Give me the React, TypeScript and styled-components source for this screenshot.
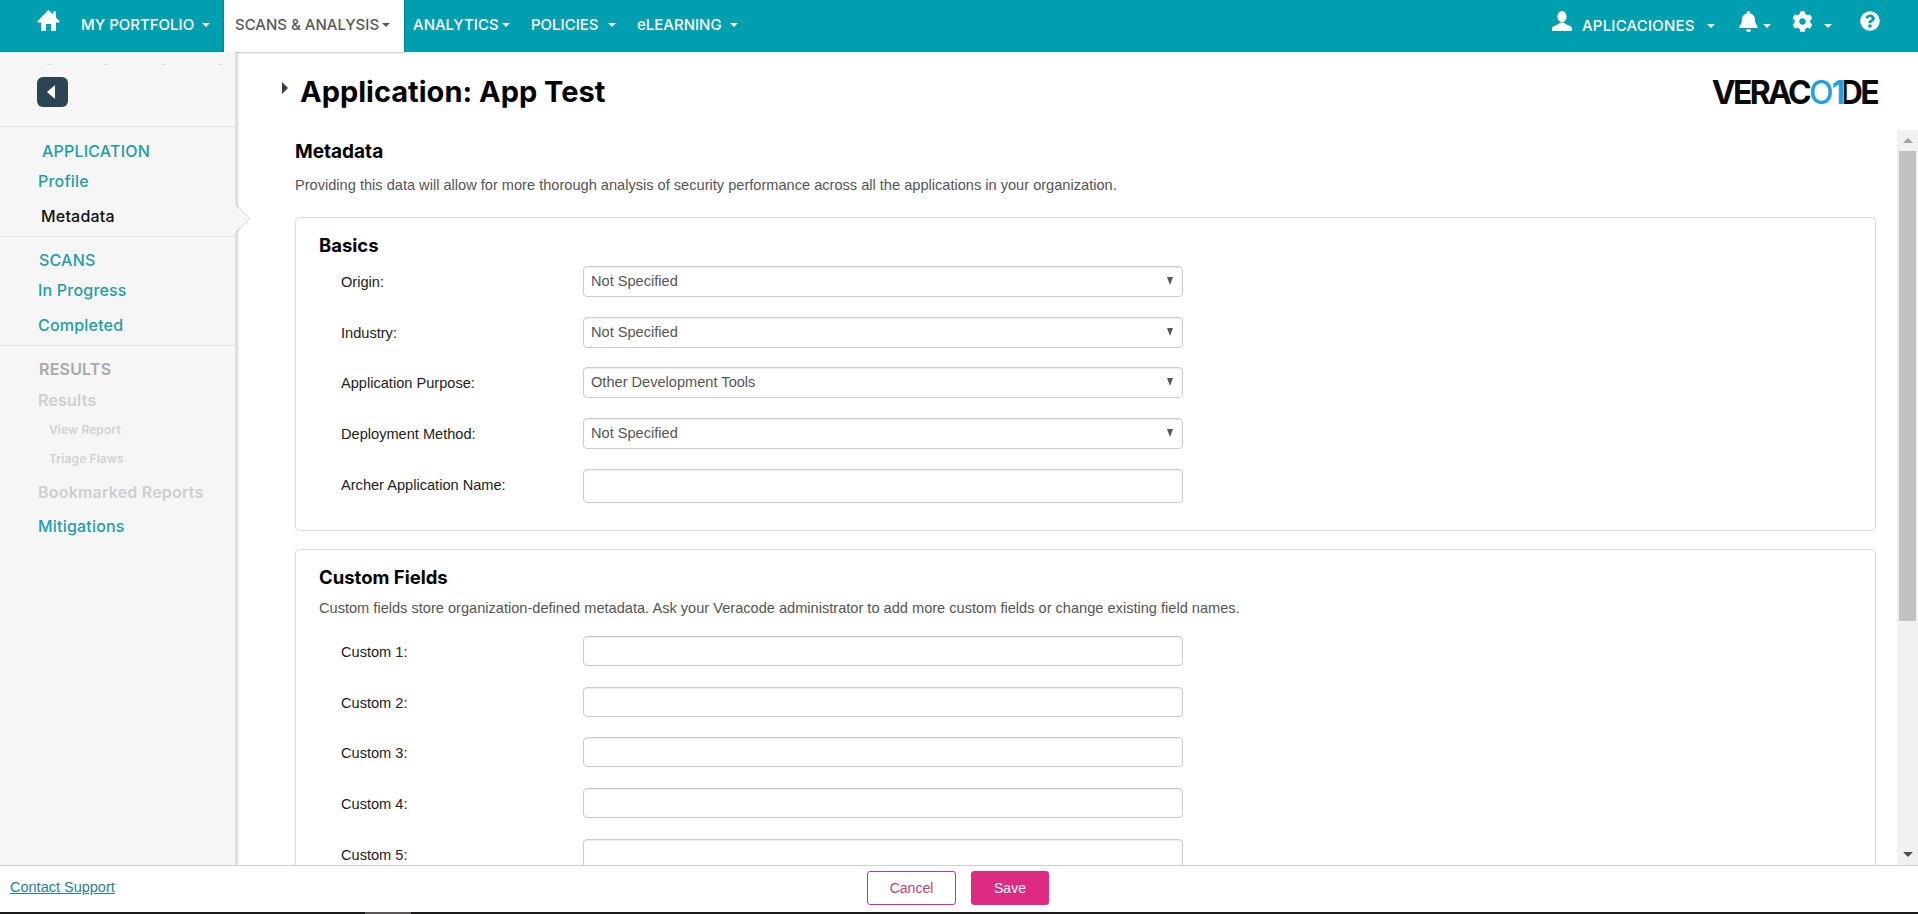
import React from "react";
import styled, { createGlobalStyle } from "styled-components";
import { FaBell, FaCog, FaQuestionCircle } from "react-icons/fa";

const HEAD = '"Inter", "Liberation Sans", sans-serif';
const BODY = '"Liberation Sans", Arial, sans-serif';
const TEAL = "#009faf";

const GlobalStyle = createGlobalStyle`
	html, body {
		margin: 0;
		padding: 0;
		height: 100%;
		overflow: hidden;
		background: #fff;
	}
	* {
		box-sizing: border-box;
	}
`;

const Page = styled.div`
	width: 1918px;
	height: 914px;
	display: flex;
	flex-direction: column;
	overflow: hidden;
`;

const TopBar = styled.header`
	height: 52px;
	flex: none;
	background: ${TEAL};
	display: flex;
	align-items: stretch;
	justify-content: space-between;
	color: #fff;
	font-family: ${HEAD};
	font-size: 15px;
	font-weight: 500;
`;

const NavLeft = styled.nav`
	display: flex;
	align-items: stretch;
	padding-left: 37px;
`;

const NavRight = styled.div`
	display: flex;
	align-items: stretch;
	padding-right: 38px;
`;

const HomeLink = styled.a`
	display: flex;
	align-items: flex-start;
	padding-top: 10px;
	width: 44px;
`;

const NavItem = styled.a<{ $active?: boolean; $w: number; $pad?: number }>`
	display: flex;
	align-items: center;
	white-space: nowrap;
	padding-bottom: 3px;
	width: ${(p) => p.$w}px;
	padding-left: ${(p) => p.$pad ?? 0}px;
	${(p) =>
		p.$active &&
		`
		background: #fff;
		color: #55585a;
		box-shadow: 0 0 2px rgba(0, 0, 0, 0.5);
	`}
`;

const Caret = styled.i<{ $gap?: number }>`
	display: inline-block;
	margin-left: ${(p) => p.$gap ?? 6}px;
	border-top: 4.5px solid currentColor;
	border-left: 4.5px solid transparent;
	border-right: 4.5px solid transparent;
`;

const IconItem = styled.a<{ $w: number; $size: number }>`
	display: flex;
	align-items: center;
	width: ${(p) => p.$w}px;
	font-size: ${(p) => p.$size}px;
	white-space: nowrap;
	padding-bottom: 10px;

	svg {
		flex: none;
	}
`;

const UserLabel = styled.span`
	font-size: 15px;
	letter-spacing: 0.2px;
	margin-left: 10px;
	padding-top: 9px;
`;

const CaretLow = styled(Caret)`
	position: relative;
	top: 5px;
`;

const Body = styled.div`
	flex: 1;
	min-height: 0;
	display: flex;
`;

const Sidebar = styled.aside`
	width: 236px;
	flex: none;
	position: relative;
	background: #f6f6f6;
	border-right: 1px solid #e4e4e4;
	box-shadow: 2px 0 2px rgba(0, 0, 0, 0.16);
	font-family: ${HEAD};
	font-size: 16px;
	letter-spacing: 0.2px;
	font-weight: 500;
`;

const BackRow = styled.div`
	height: 75px;
	padding: 25px 0 0 37px;
	border-bottom: 1px solid #e2e2e2;
	background:
		repeating-linear-gradient(
			90deg,
			transparent 0 47px,
			#dedede 47px 52px,
			transparent 52px 57px
		)
		0 12px / 100% 1px no-repeat;
`;

const BackButton = styled.button`
	width: 31px;
	height: 30px;
	padding: 0;
	border: 0;
	border-radius: 6px;
	background: #2b4553;
	display: flex;
	align-items: center;
	justify-content: center;

	&::before {
		content: "";
		border-right: 8px solid #fff;
		border-top: 7px solid transparent;
		border-bottom: 7px solid transparent;
		margin-right: 3px;
	}
`;

const Group = styled.div<{ $h: number; $top: number; $border?: boolean }>`
	height: ${(p) => p.$h}px;
	padding-top: ${(p) => p.$top}px;
	${(p) => p.$border && "border-bottom: 1px solid #e2e2e2;"}
`;

const SideHead = styled.div<{ $dim?: boolean; $indent?: number; $h: number }>`
	height: ${(p) => p.$h}px;
	line-height: 22px;
	padding-left: ${(p) => p.$indent ?? 39}px;
	color: ${(p) => (p.$dim ? "#a9a9a9" : "#1f9ea6")};
	font-weight: ${(p) => (p.$dim ? 600 : 500)};
`;

const SideLink = styled.a<{ $tone?: "current" | "off"; $indent?: number; $h?: number }>`
	display: block;
	height: ${(p) => p.$h ?? 35}px;
	line-height: ${(p) => p.$h ?? 35}px;
	padding-left: ${(p) => p.$indent ?? 38}px;
	color: ${(p) =>
		p.$tone === "current" ? "#111" : p.$tone === "off" ? "#cfcfcf" : "#1f9ea6"};
	font-weight: ${(p) => (p.$tone === "off" ? 600 : 500)};
`;

const SubLink = styled.a`
	display: block;
	height: 29px;
	line-height: 29px;
	padding-left: 49px;
	color: #d2d2d2;
	font-size: 12px;
	letter-spacing: 0.1px;
	font-weight: 600;
`;

const Notch = styled.div`
	position: absolute;
	left: 226px;
	top: 157px;
	width: 19px;
	height: 19px;
	background: #f6f6f6;
	transform: rotate(45deg);
	box-shadow: 1px -1px 1px rgba(0, 0, 0, 0.14);
`;

const Main = styled.main`
	flex: 1;
	min-width: 0;
	display: flex;
	flex-direction: column;
`;

const TitleBar = styled.div`
	height: 78px;
	flex: none;
	display: flex;
	align-items: flex-start;
	justify-content: space-between;
	padding: 22px 40px 0 46px;
`;

const TitleWrap = styled.div`
	display: flex;
	align-items: flex-start;
`;

const TitleArrow = styled.i`
	margin-top: 8px;
	margin-right: 12px;
	border-left: 6px solid #3b3b3b;
	border-top: 6px solid transparent;
	border-bottom: 6px solid transparent;
`;

const Title = styled.h1`
	margin: 0;
	font-family: ${HEAD};
	font-size: 29px;
	line-height: 36px;
	font-weight: 700;
	color: #000;
`;

const Logo = styled.div`
	display: flex;
	align-items: center;
	height: 36px;
	margin-right: 1px;
	font-family: ${HEAD};
	font-size: 32px;
	font-weight: 700;
	letter-spacing: -2.7px;
	color: #0b0b0b;
`;

const LogoO = styled.span`
	color: #1ea2e0;
	font-weight: 500;
`;

const LogoOne = styled.span`
	position: relative;
	z-index: 1;
	color: #1ea2e0;
	background: #fff;
	margin-left: 1px;
	margin-right: -4px;
	padding-right: 1px;
`;

const ScrollArea = styled.div`
	flex: 1;
	min-height: 0;
	display: flex;
`;

const Content = styled.div`
	flex: 1;
	min-width: 0;
	overflow: hidden;
	padding: 0 21px 0 59px;
	font-family: ${BODY};
	font-size: 14.6px;
	color: #555;
`;

const H2 = styled.h2`
	margin: 0;
	height: 44px;
	line-height: 44px;
	font-family: ${HEAD};
	font-size: 19px;
	font-weight: 700;
	color: #000;
`;

const Lead = styled.p`
	margin: 0;
	height: 43px;
	line-height: 22px;
`;

const Card = styled.section<{ $h: number }>`
	height: ${(p) => p.$h}px;
	margin-bottom: 18px;
	padding: 12px 23px 0;
	border: 1px solid #ddd;
	border-radius: 4px;
	background: #fff;
`;

const CardTitle = styled.h3`
	margin: 0;
	height: 36px;
	line-height: 30px;
	font-family: ${HEAD};
	font-size: 18.5px;
	font-weight: 700;
	color: #000;
`;

const CardNote = styled.p`
	margin: -5px 0 0;
	height: 43px;
	line-height: 30px;
	white-space: nowrap;
`;

const FieldRow = styled.div`
	display: flex;
	align-items: flex-start;
	height: 50.7px;
`;

const FieldLabel = styled.label`
	width: 264px;
	flex: none;
	padding-left: 22px;
	line-height: 30px;
	color: #222;
	padding-top: 1px;
`;

const Select = styled.div`
	width: 600px;
	height: 31px;
	position: relative;
	padding-left: 7px;
	line-height: 28px;
	border: 1px solid #ccc;
	border-radius: 4px;
	background: #fff;
	box-shadow: inset 0 1px 1px rgba(0, 0, 0, 0.08);

	&::after {
		content: "";
		position: absolute;
		right: 9px;
		top: 10px;
		border-top: 8px solid #555;
		border-left: 3.5px solid transparent;
		border-right: 3.5px solid transparent;
	}
`;

const Input = styled.input<{ $tall?: boolean }>`
	display: block;
	width: 600px;
	height: ${(p) => (p.$tall ? 34 : 30)}px;
	padding: 0 7px;
	border: 1px solid #ccc;
	border-radius: 4px;
	background: #fff;
	box-shadow: inset 0 1px 1px rgba(0, 0, 0, 0.08);
	outline: none;
`;

const ScrollTrack = styled.div`
	width: 21px;
	flex: none;
	display: flex;
	flex-direction: column;
	background: #f1f1f1;
`;

const ScrollButton = styled.div<{ $down?: boolean }>`
	height: 21px;
	flex: none;
	display: flex;
	align-items: center;
	justify-content: center;

	&::before {
		content: "";
		border-left: 5px solid transparent;
		border-right: 5px solid transparent;
		${(p) =>
			p.$down
				? "border-top: 5px solid #505050;"
				: "border-bottom: 5px solid #a3a3a3;"}
	}
`;

const ScrollRail = styled.div`
	flex: 1;
`;

const ScrollThumb = styled.div`
	height: 470px;
	margin: 0 2px;
	background: #c1c1c1;
`;

const Footer = styled.footer`
	height: 47px;
	flex: none;
	position: relative;
	display: flex;
	align-items: center;
	justify-content: center;
	gap: 15px;
	padding-bottom: 2px;
	padding-right: 2px;
	background: #fff;
	border-top: 1px solid #d0d0d0;
	font-family: ${BODY};
	font-size: 14.5px;
`;

const Support = styled.a`
	position: absolute;
	left: 10px;
	top: 13px;
	color: #2a7d9c;
	text-decoration: underline;
`;

const Btn = styled.button<{ $primary?: boolean }>`
	width: ${(p) => (p.$primary ? 78 : 89)}px;
	height: 34px;
	padding: 0;
	border: 1px solid #de2b82;
	border-radius: 3px;
	background: ${(p) => (p.$primary ? "#de2b82" : "#fff")};
	color: ${(p) => (p.$primary ? "#fff" : "#c93a7f")};
	font-family: ${BODY};
	font-size: 14px;
`;

const BottomStrip = styled.div`
	height: 2px;
	flex: none;
	background: linear-gradient(
		90deg,
		#1c1a18 365px,
		#5a5652 365px,
		#5a5652 411px,
		#1c1a18 411px
	);
`;

const HomeIcon = () => (
	<svg width="23" height="21" viewBox="0 0 23 21" fill="#fff">
		<path d="M11.5 0 L16 4.5 V1.5 H19 V7.5 L23 11.5 L21.5 12.5 H19 V21 H14 V14 H9 V21 H4 V12.5 H1.5 L0 11.5 Z" />
	</svg>
);

const UserIcon = () => (
	<svg width="20" height="20" viewBox="0 0 20 20" fill="#fff">
		<ellipse cx="10" cy="5.6" rx="4.6" ry="5.6" />
		<path d="M0 20 V17.5 C0 15 5 14.4 7 12.6 C8 11 12 11 13 12.6 C15 14.4 20 15 20 17.5 V20 Z" />
	</svg>
);

const basics = [
	{ label: "Origin:", value: "Not Specified" },
	{ label: "Industry:", value: "Not Specified" },
	{ label: "Application Purpose:", value: "Other Development Tools" },
	{ label: "Deployment Method:", value: "Not Specified" },
];

const customs = ["Custom 1:", "Custom 2:", "Custom 3:", "Custom 4:", "Custom 5:"];

const App = () => {
	return (
		<Page>
			<GlobalStyle />
			<TopBar>
				<NavLeft>
					<HomeLink>
						<HomeIcon />
					</HomeLink>
					<NavItem $w={143}>
						MY PORTFOLIO
						<Caret $gap={8} />
					</NavItem>
					<NavItem $active $w={180} $pad={11}>
						SCANS &amp; ANALYSIS
						<Caret $gap={3} />
					</NavItem>
					<NavItem $w={127} $pad={9}>
						ANALYTICS
						<Caret $gap={3} />
					</NavItem>
					<NavItem $w={106}>
						POLICIES
						<Caret $gap={9} />
					</NavItem>
					<NavItem $w={110}>
						eLEARNING
						<Caret $gap={8} />
					</NavItem>
				</NavLeft>
				<NavRight>
					<IconItem $w={186} $size={20}>
						<UserIcon />
						<UserLabel>APLICACIONES</UserLabel>
						<CaretLow $gap={12} />
					</IconItem>
					<IconItem $w={54} $size={21}>
						<FaBell />
						<CaretLow $gap={4} />
					</IconItem>
					<IconItem $w={68} $size={21}>
						<FaCog />
						<CaretLow $gap={11} />
					</IconItem>
					<IconItem $w={20} $size={20}>
						<FaQuestionCircle />
					</IconItem>
				</NavRight>
			</TopBar>
			<Body>
				<Sidebar>
					<BackRow>
						<BackButton aria-label="Collapse" />
					</BackRow>
					<Group $h={110} $top={13} $border>
						<SideHead $indent={42} $h={24}>
							APPLICATION
						</SideHead>
						<SideLink>Profile</SideLink>
						<SideLink $tone="current" $indent={41}>
							Metadata
						</SideLink>
					</Group>
					<Group $h={109} $top={12} $border>
						<SideHead $h={24}>SCANS</SideHead>
						<SideLink>In Progress</SideLink>
						<SideLink>Completed</SideLink>
					</Group>
					<Group $h={200} $top={12}>
						<SideHead $dim $h={27}>
							RESULTS
						</SideHead>
						<SideLink $tone="off" $h={30}>
							Results
						</SideLink>
						<SubLink>View Report</SubLink>
						<SubLink>Triage Flaws</SubLink>
						<SideLink $tone="off" $h={38}>
							Bookmarked Reports
						</SideLink>
						<SideLink $h={30}>Mitigations</SideLink>
					</Group>
					<Notch />
				</Sidebar>
				<Main>
					<TitleBar>
						<TitleWrap>
							<TitleArrow />
							<Title>Application: App Test</Title>
						</TitleWrap>
						<Logo>
							VERAC<LogoO>O</LogoO>
							<LogoOne>1</LogoOne>DE
						</Logo>
					</TitleBar>
					<ScrollArea>
						<Content>
							<H2>Metadata</H2>
							<Lead>
								Providing this data will allow for more thorough analysis of
								security performance across all the applications in your
								organization.
							</Lead>
							<Card $h={314}>
								<CardTitle>Basics</CardTitle>
								{basics.map((b) => (
									<FieldRow key={b.label}>
										<FieldLabel>{b.label}</FieldLabel>
										<Select>{b.value}</Select>
									</FieldRow>
								))}
								<FieldRow>
									<FieldLabel>Archer Application Name:</FieldLabel>
									<Input $tall />
								</FieldRow>
							</Card>
							<Card $h={400}>
								<CardTitle>Custom Fields</CardTitle>
								<CardNote>
									Custom fields store organization-defined metadata. Ask your
									Veracode administrator to add more custom fields or change
									existing field names.
								</CardNote>
								{customs.map((c) => (
									<FieldRow key={c}>
										<FieldLabel>{c}</FieldLabel>
										<Input />
									</FieldRow>
								))}
							</Card>
						</Content>
						<ScrollTrack>
							<ScrollButton />
							<ScrollThumb />
							<ScrollRail />
							<ScrollButton $down />
						</ScrollTrack>
					</ScrollArea>
				</Main>
			</Body>
			<Footer>
				<Support>Contact Support</Support>
				<Btn>Cancel</Btn>
				<Btn $primary>Save</Btn>
			</Footer>
			<BottomStrip />
		</Page>
	);
};

export default App;
